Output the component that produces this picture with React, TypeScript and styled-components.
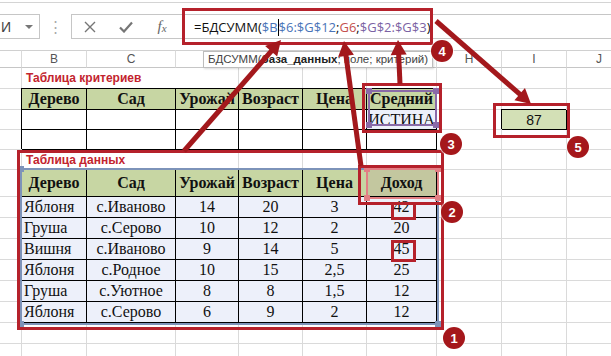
import React from "react";
import styled, { createGlobalStyle, css } from "styled-components";

const GRID = "#dadada";
const RED = "#b5212b";
const ARROW = "#a3181c";

const GlobalStyle = createGlobalStyle`
  html, body {
    margin: 0;
    padding: 0;
    background: #fff;
  }
  body {
    width: 611px;
    height: 356px;
    overflow: hidden;
    font-family: "Liberation Sans", Arial, sans-serif;
  }
`;

const Page = styled.div`
  position: relative;
  width: 611px;
  height: 356px;
  overflow: hidden;
  background: #fff;
`;

const TopEdge = styled.div`
  height: 2px;
  border-bottom: 1px solid #d4d4d4;
`;

/* ---------- formula bar ---------- */

const FormulaRow = styled.div`
  height: 47px;
  display: flex;
  align-items: center;
`;

const NameBox = styled.div`
  box-sizing: border-box;
  width: 40px;
  height: 25px;
  border: 1px solid #c6c6c6;
  border-left: none;
  display: flex;
  align-items: center;
  justify-content: space-between;
  padding: 0 6px 0 1px;
  font-size: 14px;
  color: #444;
`;

const DropArrow = styled.i`
  width: 0;
  height: 0;
  border-left: 4px solid transparent;
  border-right: 4px solid transparent;
  border-top: 4px solid #777;
`;

const Splitter = styled.div`
  width: 31px;
  text-align: center;
  color: #aaa;
  font-size: 15px;
`;

const BarGroup = styled.div`
  box-sizing: border-box;
  flex: 1;
  height: 25px;
  border: 1px solid #c6c6c6;
  border-right: none;
  display: flex;
  align-items: center;
`;

const IconBtn = styled.div`
  width: 36px;
  display: flex;
  justify-content: center;
  align-items: center;
`;

const Fx = styled.span`
  font-family: "Liberation Serif", serif;
  font-style: italic;
  font-size: 15px;
  color: #666;
  sub {
    font-size: 11px;
    vertical-align: -1px;
  }
`;

const FormulaInput = styled.div`
  flex: 1;
  padding-left: 14px;
  font-family: "Open Sans", "Liberation Sans", sans-serif;
  font-size: 13px;
  color: #111;
  white-space: nowrap;
`;

const Ref = styled.span<{ $c: string }>`
  color: ${(p) => p.$c};
`;

const Caret = styled.span`
  display: inline-block;
  width: 1px;
  height: 17px;
  background: #000;
  vertical-align: -4px;
`;

/* ---------- sheet ---------- */

const Sheet = styled.div`
  display: grid;
  grid-template-columns: 22px 65px 89px 63px 64px 64px 70px 65px 65px 65px;
  grid-template-rows: 18px 21px 21px 20px 20px 20px 27px repeat(6, 21px) 21px 21px;
`;

type Kind = "grid" | "colhdr" | "head" | "data" | "blank" | "result" | "title";

const Cell = styled.div<{ $kind?: Kind; $left?: boolean; $span?: number; $fill?: string }>`
  box-sizing: border-box;
  display: flex;
  align-items: center;
  justify-content: ${(p) => (p.$left ? "flex-start" : "center")};
  padding: 0 2px;
  white-space: nowrap;
  border-right: 1px solid ${GRID};
  border-bottom: 1px solid ${GRID};
  font-family: "Liberation Serif", "Times New Roman", serif;
  font-size: 16px;
  color: #111;
  ${(p) => p.$span && css`grid-column: span ${p.$span};`}

  ${(p) =>
    p.$kind === "colhdr" &&
    css`
      font-family: "Liberation Sans", Arial, sans-serif;
      font-size: 12px;
      color: #555;
      border-top: 1px solid #d0d0d0;
      border-bottom-color: #c6c6c6;
    `}

  ${(p) =>
    p.$kind === "title" &&
    css`
      border-right: none;
      font-family: "Liberation Sans", Arial, sans-serif;
      font-weight: bold;
      font-size: 12px;
      color: #c3242e;
      padding-left: 4px;
    `}

  ${(p) =>
    (p.$kind === "head" || p.$kind === "data" || p.$kind === "blank" || p.$kind === "result") &&
    css`
      border-color: #000;
      box-shadow: -1px -1px 0 0 #000;
    `}

  ${(p) =>
    p.$kind === "head" &&
    css`
      background: ${p.$fill || "#c7d6a3"};
      font-weight: bold;
    `}

  ${(p) =>
    p.$kind === "data" &&
    css`
      background: #edf0fa;
    `}

  ${(p) =>
    p.$kind === "result" &&
    css`
      background: #d3e0b6;
      font-family: "Liberation Sans", Arial, sans-serif;
      font-size: 14px;
    `}
`;

/* ---------- overlays ---------- */

const Tooltip = styled.div`
  position: absolute;
  left: 203px;
  top: 51px;
  width: 230px;
  height: 17px;
  box-sizing: border-box;
  background: #fff;
  border: 1px solid #bdbdbd;
  box-shadow: 1px 1px 2px rgba(0, 0, 0, 0.15);
  padding-left: 4px;
  font-size: 11.5px;
  line-height: 15px;
  color: #444;
  white-space: nowrap;
  b {
    color: #222;
  }
`;

const Box = styled.div<{ $x: number; $y: number; $w: number; $h: number }>`
  position: absolute;
  box-sizing: border-box;
  left: ${(p) => p.$x}px;
  top: ${(p) => p.$y}px;
  width: ${(p) => p.$w}px;
  height: ${(p) => p.$h}px;
`;

const RedBox = styled(Box)`
  border: 3px solid ${RED};
`;

const RangeBox = styled(Box)<{ $c: string }>`
  border: 2px solid ${(p) => p.$c};
`;

const Handle = styled.i<{ $c: string; $r?: boolean; $b?: boolean }>`
  position: absolute;
  width: 6px;
  height: 6px;
  background: ${(p) => p.$c};
  ${(p) => (p.$r ? "right: -4px;" : "left: -4px;")}
  ${(p) => (p.$b ? "bottom: -4px;" : "top: -4px;")}
`;

const Badge = styled.div<{ $x: number; $y: number }>`
  position: absolute;
  left: ${(p) => p.$x - 11}px;
  top: ${(p) => p.$y - 11}px;
  width: 22px;
  height: 22px;
  border-radius: 50%;
  background: #a5171b;
  box-shadow: 0 0 0 1px rgba(255, 255, 255, 0.6);
  color: #fff;
  font-weight: bold;
  font-size: 13px;
  display: flex;
  align-items: center;
  justify-content: center;
`;

const ArrowLayer = styled.svg`
  position: absolute;
  left: 0;
  top: 0;
  pointer-events: none;
`;

const Range = ({ x, y, w, h, c }: { x: number; y: number; w: number; h: number; c: string }) => (
  <RangeBox $x={x} $y={y} $w={w} $h={h} $c={c}>
    <Handle $c={c} />
    <Handle $c={c} $r />
    <Handle $c={c} $b />
    <Handle $c={c} $r $b />
  </RangeBox>
);

const Arrow = ({ x1, y1, x2, y2 }: { x1: number; y1: number; x2: number; y2: number }) => {
  const d = Math.hypot(x2 - x1, y2 - y1);
  const ux = (x2 - x1) / d;
  const uy = (y2 - y1) / d;
  const len = 15;
  const half = 8;
  const bx = x2 - ux * len;
  const by = y2 - uy * len;
  const pts = `${x2},${y2} ${bx - uy * half},${by + ux * half} ${bx + uy * half},${by - ux * half}`;
  return (
    <g>
      <line x1={x1} y1={y1} x2={bx + ux * 2} y2={by + uy * 2} stroke={ARROW} strokeWidth={5} />
      <polygon points={pts} fill={ARROW} />
    </g>
  );
};

/* ---------- data ---------- */

const cols = ["B", "C", "D", "E", "F", "G", "H", "I", "J"];
const heads1 = ["Дерево", "Сад", "Урожай", "Возраст", "Цена", "Средний"];
const heads2 = ["Дерево", "Сад", "Урожай", "Возраст", "Цена", "Доход"];
const rows = [
  ["Яблоня", "с.Иваново", "14", "20", "3", "42"],
  ["Груша", "с.Серово", "10", "12", "2", "20"],
  ["Вишня", "с.Иваново", "9", "14", "5", "45"],
  ["Яблоня", "с.Родное", "10", "15", "2,5", "25"],
  ["Груша", "с.Уютное", "8", "8", "1,5", "12"],
  ["Яблоня", "с.Серово", "6", "9", "2", "12"],
];

const Blank = ({ n }: { n: number }) => (
  <>
    {Array.from({ length: n }, (_, i) => (
      <Cell key={i} $kind="grid" />
    ))}
  </>
);

export default function App() {
  return (
    <Page>
      <GlobalStyle />
      <TopEdge />
      <FormulaRow>
        <NameBox>
          <span>И</span>
          <DropArrow />
        </NameBox>
        <Splitter>⋮</Splitter>
        <BarGroup>
          <IconBtn>
            <svg width="12" height="12" viewBox="0 0 12 12">
              <path d="M1 1 L11 11 M11 1 L1 11" stroke="#767676" strokeWidth="1.4" fill="none" />
            </svg>
          </IconBtn>
          <IconBtn>
            <svg width="14" height="12" viewBox="0 0 14 12">
              <path d="M1 6.5 L5 10.5 L13 1.5" stroke="#767676" strokeWidth="2.2" fill="none" />
            </svg>
          </IconBtn>
          <IconBtn>
            <Fx>
              f<sub>x</sub>
            </Fx>
          </IconBtn>
          <FormulaInput>
            =БДСУММ(
            <Ref $c="#4a74b8">
              $B
              <Caret />
              $6:$G$12
            </Ref>
            ;<Ref $c="#c4504d">G6</Ref>;<Ref $c="#7b62a3">$G$2:$G$3</Ref>)
          </FormulaInput>
        </BarGroup>
      </FormulaRow>

      <Sheet>
        <Cell $kind="colhdr" />
        {cols.map((c) => (
          <Cell key={c} $kind="colhdr">
            {c}
          </Cell>
        ))}

        <Cell $kind="grid" />
        <Cell $kind="title" $left $span={2}>
          Таблица критериев
        </Cell>
        <Blank n={7} />

        <Cell $kind="grid" />
        {heads1.map((h) => (
          <Cell key={h} $kind="head">
            {h}
          </Cell>
        ))}
        <Blank n={3} />

        <Cell $kind="grid" />
        {[0, 1, 2, 3, 4].map((i) => (
          <Cell key={i} $kind="blank" />
        ))}
        <Cell $kind="data">ИСТИНА</Cell>
        <Cell $kind="grid" />
        <Cell $kind="result">87</Cell>
        <Cell $kind="grid" />

        <Cell $kind="grid" />
        {[0, 1, 2, 3, 4, 5].map((i) => (
          <Cell key={i} $kind="blank" />
        ))}
        <Blank n={3} />

        <Cell $kind="grid" />
        <Cell $kind="title" $left $span={2}>
          Таблица данных
        </Cell>
        <Blank n={7} />

        <Cell $kind="grid" />
        {heads2.map((h) => (
          <Cell key={h} $kind="head" $fill={h === "Доход" ? "#c3c79f" : undefined}>
            {h}
          </Cell>
        ))}
        <Blank n={3} />

        {rows.map((r, ri) => (
          <React.Fragment key={ri}>
            <Cell $kind="grid" />
            {r.map((v, ci) => (
              <Cell key={ci} $kind="data" $left={ci === 0}>
                {v}
              </Cell>
            ))}
            <Blank n={3} />
          </React.Fragment>
        ))}

        <Blank n={10} />
        <Blank n={10} />
      </Sheet>

      <Tooltip>
        БДСУММ(<b>база_данных</b>; поле; критерий)
      </Tooltip>

      <Range x={20} y={168} w={419} h={157} c="#7d93b9" />
      <Range x={368} y={90} w={69} h={36} c="#8a6aa8" />
      <Range x={366} y={168} w={73} h={31} c="#e27f84" />

      <RedBox $x={182} $y={8} $w={251} $h={37} />
      <RedBox $x={17} $y={150} $w={427} $h={180} />
      <RedBox $x={358} $y={165} $w={86} $h={40} />
      <RedBox $x={362} $y={83} $w={80} $h={50} />
      <RedBox $x={391} $y={202} $w={25} $h={18} />
      <RedBox $x={391} $y={240} $w={25} $h={22} />
      <RedBox $x={493} $y={103} $w={77} $h={35} />

      <ArrowLayer width="611" height="356" viewBox="0 0 611 356">
        <Arrow x1={184} y1={151} x2={281} y2={40} />
        <Arrow x1={361} y1={166} x2={344} y2={41} />
        <Arrow x1={400} y1={84} x2={398} y2={40} />
        <Arrow x1={436} y1={21} x2={531} y2={104} />
      </ArrowLayer>

      <Badge $x={442} $y={51}>4</Badge>
      <Badge $x={451} $y={144}>3</Badge>
      <Badge $x={578} $y={147}>5</Badge>
      <Badge $x={452} $y={212}>2</Badge>
      <Badge $x={454} $y={338}>1</Badge>
    </Page>
  );
}
